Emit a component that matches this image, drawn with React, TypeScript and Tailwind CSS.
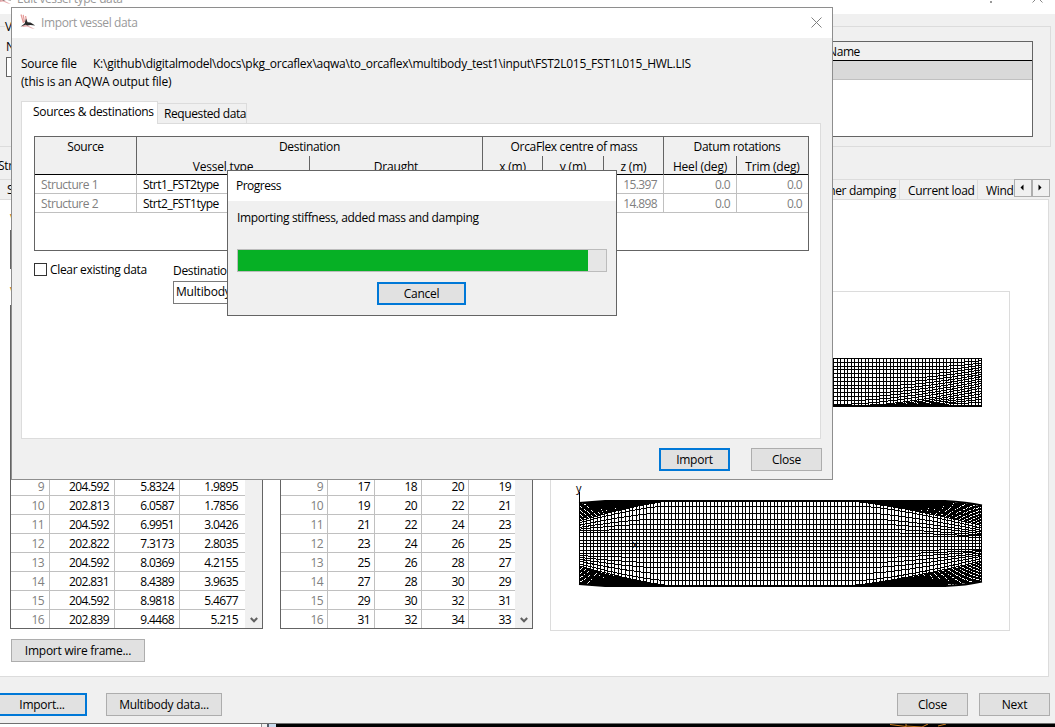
import React from "react";

const cx = (...c: (string | false | undefined)[]) => c.filter(Boolean).join(" ");

function Button({ children, primary, className }: { children: React.ReactNode; primary?: boolean; className?: string }) {
  return (
    <button
      className={cx(
        "flex h-[23px] shrink-0 items-center justify-center bg-[#e1e1e1] tracking-[-0.25px] text-black",
        primary ? "border-2 border-[#0078d7]" : "border border-[#adadad]",
        className
      )}
    >
      {children}
    </button>
  );
}

function Logo({ className }: { className?: string }) {
  return (
    <svg viewBox="0 0 16 16" className={cx("h-4 w-4 shrink-0", className)}>
      <path d="M1 0.5 L3.5 9 M3.2 0.8 L4.5 8 M5.6 2 L6.4 7" stroke="#e59a98" strokeWidth="1.2" fill="none" />
      <path d="M1.5 12 L6 10.5 L14.8 15 L12 14.6 L7 12.6 L3 13 Z" fill="#e9aeb0" />
      <path d="M0.5 12.8 L4.6 9.4 L6 4.6 L7.6 8.2 L10.5 8.6 L15.2 11.4 L10.4 10.9 L7.6 11.4 L5.4 10.8 Z" fill="#2a2a2a" />
    </svg>
  );
}

const END = 981;

function fade(t: number, power = 1.35) {
  const u = Math.max(0, Math.min(1, t));
  return (1 - u) ** power;
}

function verticals(from: number, to: number) {
  const xs: number[] = [];
  for (let i = 0; from + i * 3.54 < to; i++) xs.push(Math.round(from + i * 3.54));
  return xs;
}

function PlanMesh() {
  const lines: string[] = [];
  const main = [6, 13, 19, 24, 29, 32.5, 36, 40];
  const hull = (x: number) => (x > 940 ? ((x - 940) / 41) ** 1.5 * 5 : x < 605 ? ((605 - x) / 26) * 2 : 0);
  const trace = (f: (x: number) => number) => {
    for (const side of [1, -1]) {
      let d = "";
      for (let x = 579; x <= END; x += 3) {
        const y = 543.3 - side * (43 - f(x));
        d += (d ? "L" : "M") + x + " " + y.toFixed(1);
      }
      lines.push(d);
    }
  };
  main.forEach((m) => {
    trace((x) => {
      const eL = Math.max(m, 20.5 + m * 0.35);
      const eR = Math.max(m, 26 + m * 0.3);
      return m + (eL - m) * fade((x - 579) / (90 - m)) + (eR - m) * fade((END - x) / (125 - m));
    });
  });
  for (let k = 0; k < 14; k++) {
    trace((x) => Math.max(hull(x), (3 + k * 1.35) * fade((x - 579) / (45 + k * 4)) + (5 + k * 1.55) * fade((END - x) / (75 + k * 5))));
  }
  return (
    <g fill="none" stroke="#000" strokeWidth="1">
      <g shapeRendering="crispEdges">
        {verticals(579, END).map((x) => (
          <path key={x} d={`M${x + 0.5} ${500.5 + hull(x)}V${586 - hull(x)}`} />
        ))}
        <path d="M579 543.5H981M981.5 505V582" />
      </g>
      {lines.map((d, i) => (
        <path key={i} d={d} shapeRendering="crispEdges" />
      ))}
      <path strokeWidth="1.8" d="M579 503L605 501H945Q967 502 982 505.5M579 584L605 586H945Q967 585 982 581.5" />
      <path d="M579.5 492V584" shapeRendering="crispEdges" />
      <g stroke="none" fill="#000" fontSize="11">
        <text x="576" y="492">y</text>
        <text x="632" y="548">x</text>
      </g>
    </g>
  );
}

function SideMesh() {
  const lines: string[] = [];
  const trace = (f: (x: number) => number) => {
    let d = "";
    for (let x = 825; x <= END; x += 3) d += (d ? "L" : "M") + x + " " + f(x).toFixed(1);
    lines.push(d);
  };
  for (let i = 1; i < 13; i++) {
    const m = i * 3.8;
    trace((x) => 358.5 + m - m * 0.4 * fade((END - x) / (15 + m * 2.6), 1.5));
  }
  for (let k = 1; k < 7; k++) trace((x) => 405 - k * 2.8 * fade((END - x) / (50 + k * 10), 1.4));
  return (
    <g fill="none" stroke="#000" shapeRendering="crispEdges">
      {verticals(826, END).map((x) => (
        <path key={x} d={`M${x + 0.5} 358V406`} />
      ))}
      {lines.map((d, i) => (
        <path key={i} d={d} />
      ))}
      <path d="M825 358.5H982M981.5 358V407" />
      <path strokeWidth="2" d="M825 406H982" />
    </g>
  );
}

const vertices = [
  ["9", "204.592", "5.8324", "1.9895"],
  ["10", "202.813", "6.0587", "1.7856"],
  ["11", "204.592", "6.9951", "3.0426"],
  ["12", "202.822", "7.3173", "2.8035"],
  ["13", "204.592", "8.0369", "4.2155"],
  ["14", "202.831", "8.4389", "3.9635"],
  ["15", "204.592", "8.9818", "5.4677"],
  ["16", "202.839", "9.4468", "5.215"],
];
const panels = [
  ["9", "17", "18", "20", "19"],
  ["10", "19", "20", "22", "21"],
  ["11", "21", "22", "24", "23"],
  ["12", "23", "24", "26", "25"],
  ["13", "25", "26", "28", "27"],
  ["14", "27", "28", "30", "29"],
  ["15", "29", "30", "32", "31"],
  ["16", "31", "32", "34", "33"],
];

function Grid({ rows, cols, pad, lastPad }: { rows: string[][]; cols: string; pad: string; lastPad: string }) {
  return (
    <div className="flex h-[324px] w-[253px] border border-[#646464] bg-white">
      <div className="flex w-[234px] flex-col justify-between">
        <div className="h-[19px] border-b border-black bg-[#f0f0f0]" />
        <div>
          {rows.map((r, i) => (
            <div key={i} className={cx("grid", cols, i < rows.length - 1 ? "h-[19px] border-b border-[#c0c0c0]" : "h-[18px]")}>
              {r.map((c, j) => (
                <div
                  key={j}
                  className={cx(
                    "flex h-[18px] items-center justify-end tracking-[-0.6px]",
                    j === 0 ? "text-[#808080]" : "",
                    j < r.length - 1 ? "border-r border-[#c0c0c0]" : "",
                    j < r.length - 1 ? pad : lastPad
                  )}
                >
                  <span className="h-[16px]">{c}</span>
                </div>
              ))}
            </div>
          ))}
        </div>
      </div>
      <div className="flex flex-1 items-end justify-center bg-[#f0f0f0] pb-[4px]">
        <svg viewBox="0 0 8 8" className="h-2 w-2">
          <path d="M0.8 2L4 5.3L7.2 2" stroke="#606060" strokeWidth="2" fill="none" />
        </svg>
      </div>
    </div>
  );
}

function EditWindow() {
  return (
    <div className="flex h-[724px] w-[1055px] flex-col border-b border-[#707070] bg-[#f0f0f0]">
      <div className="flex h-[14px] shrink-0 justify-between overflow-hidden bg-white text-[#999]">
        <div className="flex -translate-y-[10px] gap-[5px]">
          <Logo className="-translate-x-[4px] translate-y-[-1px]" />
          <span className="-ml-[4px] tracking-[-0.4px]">Edit vessel type data</span>
        </div>
        <div className="flex gap-[40px] pr-[12px]">
          <span className="mt-px h-[2px] w-[2px] bg-[#999]" />
          <svg viewBox="0 0 11 11" className="h-[11px] w-[11px] -translate-y-[8px]">
            <path d="M0.5 0.5L10.5 10.5M10.5 0.5L0.5 10.5" stroke="#888" fill="none" />
          </svg>
        </div>
      </div>
      <div className="mt-[12px] flex h-[121px] w-[1051px] shrink-0 justify-between border border-l-0 border-[#dcdcdc] pr-[17px]">
        <div className="flex w-[60px] flex-col pl-[5px]">
          <span className="-mt-[9px] h-[18px] w-[8px] bg-[#f0f0f0] leading-[18px]">V</span>
          <span className="mt-[2px] ml-px h-[18px] leading-[18px]">N</span>
          <span className="mt-px ml-px h-[20px] border border-[#646464] bg-white" />
        </div>
        <div className="mt-[14px] h-[96px] w-[240px] border border-[#646464] bg-white">
          <div className="h-[19px] border-b border-black bg-[#f0f0f0] pl-[34px] leading-[20px] tracking-[-0.4px]">Name</div>
          <div className="h-[19px] border-b border-[#c0c0c0] bg-[#d9d9d9]" />
        </div>
      </div>
      <div className="flex h-[32px] shrink-0 items-end pb-[4px] leading-[18px]">
        <span className="-ml-[2px]">Str</span>
      </div>
      <div className="flex h-[20px] w-[1050px] shrink-0 justify-between border-t border-[#dcdcdc]">
        <span className="ml-[7px] leading-[20px]">S</span>
        <div className="flex leading-[21px]">
          <span className="border-r border-[#dcdcdc] pr-[3px]">Other damping</span>
          <span className="w-[78px] border-r border-[#dcdcdc] pl-[8px] whitespace-nowrap">Current load</span>
          <span className="w-[36px] pl-[8px]">Wind</span>
          {["M9.5 5.5v6l-3-3z", "M6.5 5.5v6l3-3z"].map((d, i) => (
            <svg key={i} viewBox="0 0 18 18" className="-mt-px h-[18px] w-[18px]">
              <rect x="0.5" y="0.5" width="17" height="17" fill="#f0f0f0" stroke="#adadad" />
              <path d={d} fill="#000" />
            </svg>
          ))}
        </div>
      </div>
      <div className="flex h-[478px] w-[1049px] shrink-0 flex-col border border-l-0 border-[#dcdcdc] bg-white pl-[10px]">
        <div className="flex">
          <div className="flex flex-col">
            <span className="mt-[10px] h-[20px] text-[#b06a10]">V</span>
            <div className="h-[39px] w-[253px] border border-[#646464] bg-[#f0f0f0]">
              <div className="h-[19px] border-b border-black" />
            </div>
            <span className="mt-[14px] h-[22px] text-[#b06a10]">V</span>
            <Grid rows={vertices} cols="grid-cols-[39px_65px_65px_65px]" pad="pr-[5px]" lastPad="pr-[7px]" />
            <Button className="mt-[10px] ml-[1px] w-[134px]">Import wire frame...</Button>
          </div>
          <div className="mt-[105px] ml-[17px]">
            <Grid rows={panels} cols="grid-cols-[47px_47px_47px_47px_46px]" pad="pr-[4px]" lastPad="pr-[4px]" />
          </div>
          <div className="mt-[91px] ml-[17px] h-[340px] w-[460px] border border-[#dcdcdc] bg-white">
            <svg viewBox="551 292 458 338" className="block h-[338px] w-[458px]">
              <SideMesh />
              <PlanMesh />
            </svg>
          </div>
        </div>
      </div>
      <div className="mt-[16px] flex justify-between pr-[5px]">
        <div className="flex">
          <Button primary className="-ml-[3px] w-[90px]">Import...</Button>
          <Button className="ml-[19px] w-[116px]">Multibody data...</Button>
        </div>
        <div className="flex gap-[11px]">
          <Button className="w-[71px]">Close</Button>
          <Button className="w-[71px]">Next</Button>
        </div>
      </div>
    </div>
  );
}

function Sub({ labels, cols }: { labels: string[]; cols: string }) {
  return (
    <div className={cx("grid h-[19px] tracking-[-0.2px]", cols)}>
      {labels.map((l, i) => (
        <span key={l} className={cx("text-center leading-[21px]", i < labels.length - 1 && "border-r border-[#646464]")}>
          {l}
        </span>
      ))}
    </div>
  );
}

function ImportWindow() {
  const data = [
    ["Structure 1", "Strt1_FST2type", "", "", "", "15.397", "0.0", "0.0"],
    ["Structure 2", "Strt2_FST1type", "", "", "", "14.898", "0.0", "0.0"],
  ];
  return (
    <div className="absolute top-[7px] left-[11px] flex h-[473px] w-[822px] flex-col border border-[#8e8e8e] bg-[#f0f0f0]">
      <div className="flex h-[30px] shrink-0 items-center bg-white pr-[10px] pl-[8px] text-[#999]">
        <Logo className="-translate-y-[1px]" />
        <span className="ml-[5px] tracking-[-0.38px]">Import vessel data</span>
        <svg viewBox="0 0 11 11" className="ml-auto h-[11px] w-[11px] -translate-y-[1px]">
          <path d="M0.5 0.5L10.5 10.5M10.5 0.5L0.5 10.5" stroke="#808080" fill="none" />
        </svg>
      </div>
      <div className="mt-[17px] ml-[9px] flex h-[18px] leading-[18px]">
        <span className="w-[72px] tracking-[-0.25px]">Source file</span>
        <span className="tracking-[-0.25px]">K:\github\digitalmodel\docs\pkg_orcaflex\aqwa\to_orcaflex\multibody_test1\input\FST2L015_FST1L015_HWL.LIS</span>
      </div>
      <div className="ml-[9px] h-[18px] leading-[18px] tracking-[-0.2px]">(this is an AQWA output file)</div>
      <div className="mt-[10px] ml-[9px] flex h-[22px] items-end">
        <span className="z-10 -mb-px h-[23px] w-[137px] border border-b-0 border-[#dcdcdc] bg-white pl-[11px] leading-[20px] whitespace-nowrap">Sources &amp; destinations</span>
        <span className="h-[20px] w-[89px] border border-b-0 border-l-0 border-[#dcdcdc] pl-[6px] leading-[20px] tracking-[-0.4px] whitespace-nowrap">Requested data</span>
      </div>
      <div className="ml-[9px] h-[316px] w-[800px] shrink-0 border border-[#dcdcdc] bg-white pt-[12px] pl-[12px]">
        <div className="h-[115px] w-[775px] border border-[#646464] bg-white">
          <div className="grid h-[38px] grid-cols-[102px_346px_181px_144px] border-b border-black bg-[#f0f0f0]">
            <div className="border-r border-[#646464] text-center leading-[20px]">Source</div>
            <div className="border-r border-[#646464]">
              <div className="h-[19px] text-center leading-[20px] tracking-[-0.3px]">Destination</div>
              <Sub labels={["Vessel type", "Draught"]} cols="grid-cols-[173px_172px]" />
            </div>
            <div className="border-r border-[#646464]">
              <div className="h-[19px] pl-[2px] text-center leading-[20px]">OrcaFlex centre of mass</div>
              <Sub labels={["x (m)", "y (m)", "z (m)"]} cols="grid-cols-[60px_61px_59px]" />
            </div>
            <div>
              <div className="h-[19px] pl-[2px] text-center leading-[20px]">Datum rotations</div>
              <Sub labels={["Heel (deg)", "Trim (deg)"]} cols="grid-cols-[73px_71px]" />
            </div>
          </div>
          {data.map((r, i) => (
            <div key={i} className="grid h-[19px] grid-cols-[102px_173px_173px_60px_61px_60px_73px_71px] border-b border-[#c0c0c0] leading-[20px] text-[#808080]">
              {r.map((c, j) => (
                <span
                  key={j}
                  className={cx(
                    "h-[18px]",
                    j < 7 && "border-r border-[#c0c0c0]",
                    j < 2 ? "pl-[6px]" : "pr-[6px] text-right tracking-[-0.6px]",
                    j === 0 && "tracking-[-0.45px]",
                    j === 1 && "tracking-[-0.5px] text-black"
                  )}
                >
                  {c}
                </span>
              ))}
            </div>
          ))}
        </div>
        <div className="flex">
          <div className="mt-[12px] flex h-[13px] w-[139px] items-center">
            <span className="h-[13px] w-[13px] border border-[#333] bg-white" />
            <span className="ml-[3px] whitespace-nowrap">Clear existing data</span>
          </div>
          <div>
            <div className="mt-[11px] h-[19px] leading-[18px]">Destination</div>
            <div className="h-[23px] w-[170px] border border-[#7a7a7a] bg-white pl-[2px] leading-[20px] tracking-[-0.2px]">Multibody</div>
          </div>
        </div>
      </div>
      <div className="mt-[9px] flex justify-end gap-[21px] pr-[10px]">
        <Button primary className="w-[71px]">Import</Button>
        <Button className="w-[71px]">Close</Button>
      </div>
    </div>
  );
}

function ProgressWindow() {
  return (
    <div className="absolute top-[170px] left-[227px] flex h-[146px] w-[390px] flex-col border border-[#646464] bg-[#f0f0f0]">
      <div className="h-[30px] shrink-0 bg-white pl-[8px] leading-[30px] tracking-[-0.5px]">Progress</div>
      <div className="mt-[8px] ml-[9px] h-[18px] leading-[18px]">Importing stiffness, added mass and damping</div>
      <div className="mt-[22px] ml-[9px] h-[23px] w-[370px] shrink-0 border border-[#bcbcbc] bg-[#e6e6e6]">
        <div className="h-full w-[350px] bg-[#06b025]" />
      </div>
      <Button primary className="mt-[10px] ml-[149px] w-[89px]">Cancel</Button>
    </div>
  );
}

export default function App() {
  return (
    <div className="relative flex h-[727px] w-[1055px] flex-col overflow-hidden font-['Open_Sans','Noto_Sans',sans-serif] text-[12px] leading-[18px] tracking-[-0.33px] text-black [font-stretch:92%]">
      <EditWindow />
      <div className="flex h-[3px] bg-black">
        <div className="w-[261px] bg-white" />
        <div className="w-[6px] border-l border-[#8e8e8e] bg-[#f0f0f0]" />
        <div className="w-[2px] bg-[#505a66]" />
        <div className="w-[7px] bg-[#c9dcee]" />
        <svg viewBox="0 0 70 3" className="ml-[610px] h-[3px] w-[70px]">
          <path d="M4 0.5L20 2.5M20 0V3M20 2L36 3L42 0M52 2L60 0" stroke="#c87a1e" fill="none" />
        </svg>
      </div>
      <ImportWindow />
      <ProgressWindow />
    </div>
  );
}
